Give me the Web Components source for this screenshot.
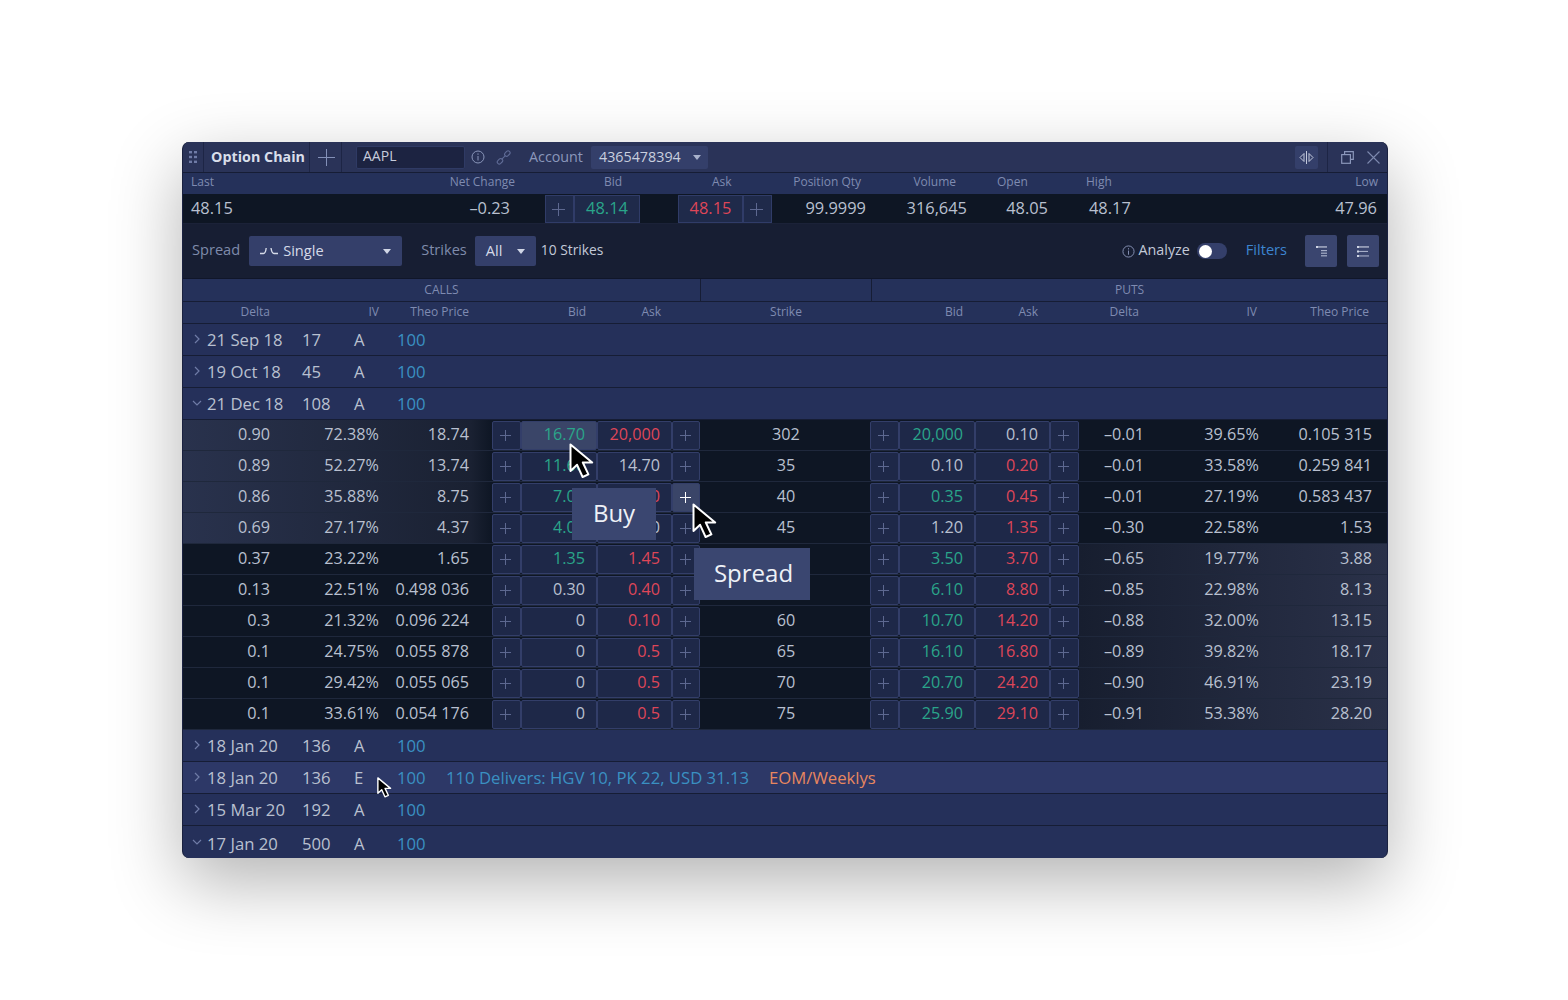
<!DOCTYPE html>
<html>
<head>
<meta charset="utf-8">
<title>Option Chain</title>
<style>
    html, body { margin: 0; background: #fff; }
    body { min-height: 1000px; font-family: "Open Sans", "Liberation Sans", sans-serif; color: #b9c0d0; }
    .page { min-height: 1000px; box-sizing: border-box; padding: 142px 0 0 182px; }
</style>
</head>
<body>
<div class="page">
<oc-window>
    <oc-titlebar></oc-titlebar>
    <oc-quote></oc-quote>
    <oc-toolbar></oc-toolbar>
    <oc-chain-head></oc-chain-head>
    <oc-group date="21 Sep 18" qty="17" kind="A" size="100"></oc-group>
    <oc-group date="19 Oct 18" qty="45" kind="A" size="100"></oc-group>
    <oc-group date="21 Dec 18" qty="108" kind="A" size="100" open></oc-group>
    <oc-row itm="calls" hot="bid" cells="0.90|72.38%|18.74|g16.70|r20,000|302|g20,000|0.10|–0.01|39.65%|0.105 315"></oc-row>
    <oc-row itm="calls" cells="0.89|52.27%|13.74|g11.60|14.70|35|0.10|r0.20|–0.01|33.58%|0.259 841"></oc-row>
    <oc-row itm="calls" hot="plus" cells="0.86|35.88%|8.75|g7.00|r7.50|40|g0.35|r0.45|–0.01|27.19%|0.583 437"></oc-row>
    <oc-row itm="calls" cells="0.69|27.17%|4.37|g4.00|4.50|45|1.20|r1.35|–0.30|22.58%|1.53"></oc-row>
    <oc-row itm="puts" cells="0.37|23.22%|1.65|g1.35|r1.45||g3.50|r3.70|–0.65|19.77%|3.88"></oc-row>
    <oc-row itm="puts" cells="0.13|22.51%|0.498 036|0.30|r0.40||g6.10|r8.80|–0.85|22.98%|8.13"></oc-row>
    <oc-row itm="puts" cells="0.3|21.32%|0.096 224|0|r0.10|60|g10.70|r14.20|–0.88|32.00%|13.15"></oc-row>
    <oc-row itm="puts" cells="0.1|24.75%|0.055 878|0|r0.5|65|g16.10|r16.80|–0.89|39.82%|18.17"></oc-row>
    <oc-row itm="puts" cells="0.1|29.42%|0.055 065|0|r0.5|70|g20.70|r24.20|–0.90|46.91%|23.19"></oc-row>
    <oc-row itm="puts" cells="0.1|33.61%|0.054 176|0|r0.5|75|g25.90|r29.10|–0.91|53.38%|28.20"></oc-row>
    <oc-group date="18 Jan 20" qty="136" kind="A" size="100"></oc-group>
    <oc-group date="18 Jan 20" qty="136" kind="E" size="100" note="110 Delivers: HGV 10, PK 22, USD 31.13" tag="EOM/Weeklys" active></oc-group>
    <oc-group date="15 Mar 20" qty="192" kind="A" size="100"></oc-group>
    <oc-group date="17 Jan 20" qty="500" kind="A" size="100" open last></oc-group>

    <oc-tip slot="over" style="left:390px;top:346px;width:84px;height:52px">Buy</oc-tip>
    <oc-tip slot="over" style="left:512px;top:406px;width:116px;height:52px;text-indent:3px">Spread</oc-tip>
    <oc-cursor slot="over" style="left:387px;top:301px"></oc-cursor>
    <oc-cursor slot="over" style="left:510px;top:361px"></oc-cursor>
    <oc-cursor slot="over" small style="left:195px;top:635px"></oc-cursor>
</oc-window>
</div>

<script>
const plusIcon = (size, color) => `<svg width="${size}" height="${size}" viewBox="0 0 ${size} ${size}" stroke="${color}" fill="none"><path d="M${size / 2} 0V${size}M0 ${size / 2}H${size}"/></svg>`

const ICONS = {
    grip: '<svg width="8" height="12" viewBox="0 0 8 12" fill="#6f7ba6"><rect width="3" height="2.4"/><rect x="5" width="3" height="2.4"/><rect y="4.8" width="3" height="2.4"/><rect x="5" y="4.8" width="3" height="2.4"/><rect y="9.6" width="3" height="2.4"/><rect x="5" y="9.6" width="3" height="2.4"/></svg>',
    info: '<svg width="14" height="14" viewBox="0 0 14 14" fill="none" stroke="#8a96ba"><circle cx="7" cy="7" r="6"/><path d="M7 6v4.5M7 3.4v1.4"/></svg>',
    link: '<svg width="15" height="15" viewBox="0 0 15 15" fill="none" stroke="#5f6b96" stroke-width="1.1"><rect x="8" y="1.2" width="6" height="4" rx="2" transform="rotate(-45 11 3.2) translate(0 .5)"/><rect x="1" y="9.3" width="6" height="4" rx="2" transform="rotate(-45 4 11.3)"/><path d="M5.6 9.4 9.4 5.6"/></svg>',
    split: '<svg width="15" height="13" viewBox="0 0 15 13" fill="none" stroke="#c3cadc"><path d="M7.5 0v13M5 2.5 1 6.5l4 4zM10 2.5l4 4-4 4z"/></svg>',
    restore: '<svg width="13" height="13" viewBox="0 0 13 13" fill="none" stroke="#8a96ba" stroke-width="1.2"><path d="M3.6 3.6V.7h8.7v7.6H9.4"/><rect x=".7" y="3.6" width="8.7" height="8.7"/></svg>',
    close: '<svg width="13" height="13" viewBox="0 0 13 13" fill="none" stroke="#7c88ae" stroke-width="1.1"><path d="M.5.5l12 12M12.5.5l-12 12"/></svg>',
    single: '<svg width="18" height="8" viewBox="0 0 18 8" fill="none" stroke="#d5dae8" stroke-width="1.4"><path d="M0 6.5h3.5Q5.5 6.5 6.2 1M11 1q.8 5.5 3 5.5H18"/></svg>',
    sortA: '<svg width="11" height="11" viewBox="0 0 11 11"><rect width="2" height="2" fill="#cfd5e4"/><rect x="2" y=".4" width="9" height="1.1" fill="#cfd5e4"/><rect x="5" y="4" width="6" height="1.2" fill="#a6aec8"/><rect x="5" y="6.6" width="6" height="1.2" fill="#a6aec8"/><rect x="5" y="9.2" width="6" height="1.2" fill="#a6aec8"/></svg>',
    sortB: '<svg width="12" height="11" viewBox="0 0 12 11"><rect width="2" height="2" fill="#cfd5e4"/><rect x="2" y=".4" width="10" height="1.1" fill="#cfd5e4"/><rect y="4.5" width="2" height="2" fill="#cfd5e4"/><rect x="2" y="4.9" width="9" height="1.1" fill="#a6aec8"/><rect y="9" width="2" height="2" fill="#cfd5e4"/><rect x="2" y="9.4" width="10" height="1.1" fill="#a6aec8"/></svg>',
    right: '<svg width="6" height="10" viewBox="0 0 6 10" fill="none" stroke="#6f7ba6" stroke-width="1.2"><path d="M1 1l4 4-4 4"/></svg>',
    down: '<svg width="10" height="6" viewBox="0 0 10 6" fill="none" stroke="#6f7ba6" stroke-width="1.2"><path d="M1 1l4 4 4-4"/></svg>'
}

// every element gets its shadow root the same way
class Base extends HTMLElement {
    render(html) {
        const shadow = this.shadowRoot || this.attachShadow({mode: 'open'})
        shadow.innerHTML = html
    }
}

class OcWindow extends Base {
    connectedCallback() {
        this.render(`
        <style>
            :host {
                display: block;
                position: relative;
                width: 1206px;
                border-radius: 7px;
                box-shadow: 0 24px 70px rgba(0, 0, 0, .3);
            }
            .clip {
                display: flex;
                flex-direction: column;
                border-left: 1px solid #1a2140;
                border-right: 1px solid #1a2140;
                border-radius: 7px;
                overflow: hidden;
                background: #0e1624;
            }
        </style>
        <div class="clip"><slot></slot></div>
        <slot name="over"></slot>
        `)
    }
}

class OcTitlebar extends Base {
    connectedCallback() {
        this.render(`
        <style>
            :host {
                display: flex;
                align-items: center;
                height: 30px;
                border-bottom: 1px solid #161d35;
                background: #2a3358;
                font-size: 14.3px;
                color: #8b97bb;
            }
            .cell {
                display: flex;
                align-items: center;
                justify-content: center;
                height: 100%;
                box-sizing: border-box;
                border-right: 1px solid #1d2545;
            }
            .grip { width: 21px; }
            .name { width: 106px; font-weight: 700; color: #d9deea; padding: 0 0 2px 3px; }
            .add { width: 32px; padding-left: 2px; }
            .sym {
                width: 109px;
                height: 23px;
                box-sizing: border-box;
                margin-left: 14px;
                padding-left: 6px;
                border: 1px solid #2f3a64;
                border-radius: 2px;
                background: #1c2341;
                color: #c6ccdc;
                font-size: 14px;
                line-height: 17px;
            }
            .i1 { margin-left: 6px; display: flex; }
            .i2 { margin-left: 11px; display: flex; }
            .acct { margin-left: 18px; padding-bottom: 1px; }
            .sel {
                display: flex;
                align-items: center;
                width: 117px;
                height: 23px;
                box-sizing: border-box;
                margin-left: 8px;
                padding: 0 0 1px 8px;
                border-radius: 2px;
                background: #343f6a;
                color: #c9cfdf;
            }
            .caret { margin: 1px 0 0 12px; border: 4px solid transparent; border-top: 5px solid #a8b1cb; border-bottom: 0; }
            .end { margin-left: auto; display: flex; align-items: center; height: 100%; }
            .split {
                display: flex;
                align-items: center;
                justify-content: center;
                width: 23px;
                height: 23px;
                border-radius: 2px;
                background: #343f6a;
            }
            .sep { width: 1px; height: 100%; margin-left: 9px; background: #1d2545; }
            .restore { display: flex; margin-left: 13px; }
            .close { display: flex; margin: 0 7px 0 13px; }
        </style>
        <div class="cell grip">${ICONS.grip}</div>
        <div class="cell name">Option Chain</div>
        <div class="cell add">${plusIcon(17, '#8390b8')}</div>
        <div class="sym">AAPL</div>
        <span class="i1">${ICONS.info}</span>
        <span class="i2">${ICONS.link}</span>
        <span class="acct">Account</span>
        <div class="sel">4365478394<span class="caret"></span></div>
        <div class="end">
            <div class="split">${ICONS.split}</div>
            <div class="sep"></div>
            <span class="restore">${ICONS.restore}</span>
            <span class="close">${ICONS.close}</span>
        </div>
        `)
    }
}

class OcQuote extends Base {
    connectedCallback() {
        this.render(`
        <style>
            :host { display: block; }
            .labels, .values {
                display: grid;
                grid-template-columns: 157px 175px 30px 95px 38px 94px 94px 101px 81px 152px 187px;
                align-items: center;
            }
            .labels {
                height: 21px;
                box-sizing: border-box;
                padding-bottom: 5px;
                background: #25315a;
                font-size: 12px;
                color: #7f8bb1;
            }
            .values {
                height: 29px;
                border-bottom: 1px solid #1b2238;
                background: #0e1624;
                font-size: 16.4px;
                color: #b9c0d0;
            }
            .values > div:not(.box) { padding-bottom: 2px; }
            .r { text-align: right; }
            .box { display: flex; align-self: stretch; margin: 1px 0 0; }
            .box div {
                display: flex;
                align-items: center;
                justify-content: center;
                box-sizing: border-box;
                border: 1px solid #303c68;
                background: #1f2a4a;
            }
            .p { width: 29px; padding-right: 2px; }
            .n { flex: 1; padding-bottom: 3px; }
            .g { color: #2aa58a; }
            .e { color: #de4658; }
        </style>
        <div class="labels">
            <div style="padding-left:8px">Last</div>
            <div class="r">Net Change</div>
            <div></div>
            <div style="padding-left:59px">Bid</div>
            <div></div>
            <div style="padding-left:34px">Ask</div>
            <div class="r" style="padding-right:5px">Position Qty</div>
            <div class="r" style="padding-right:11px">Volume</div>
            <div style="padding-left:30px">Open</div>
            <div style="padding-left:38px">High</div>
            <div class="r" style="padding-right:9px">Low</div>
        </div>
        <div class="values">
            <div style="padding-left:8px">48.15</div>
            <div class="r" style="padding-right:5px">–0.23</div>
            <div></div>
            <div class="box"><div class="p">${plusIcon(13, '#5d6890')}</div><div class="n g">48.14</div></div>
            <div></div>
            <div class="box"><div class="n e">48.15</div><div class="p">${plusIcon(13, '#5d6890')}</div></div>
            <div class="r">99.9999</div>
            <div class="r">316,645</div>
            <div class="r">48.05</div>
            <div style="padding-left:41px">48.17</div>
            <div class="r" style="padding-right:10px">47.96</div>
        </div>
        `)
    }
}

class OcToolbar extends Base {
    connectedCallback() {
        this.render(`
        <style>
            :host {
                display: flex;
                align-items: center;
                height: 54px;
                padding: 0 8px 0 9px;
                border-bottom: 1px solid #10162a;
                background: #171e33;
                font-size: 14.6px;
                color: #7f8bab;
            }
            .tx { padding-bottom: 4px; }
            .sel {
                display: flex;
                align-items: center;
                height: 30px;
                box-sizing: border-box;
                border-radius: 2px;
                background: #343f6a;
                color: #d5dae8;
            }
            .spread { width: 153px; margin-left: 9px; padding-left: 11px; }
            .spread span.t { margin-left: 5px; padding-bottom: 2px; }
            .strikes { width: 61px; margin-left: 8px; padding-left: 11px; }
            .strikes .tt { padding-bottom: 2px; }
            .caret { margin-left: auto; margin-right: 11px; border: 4px solid transparent; border-top: 5px solid #d0d6e6; border-bottom: 0; }
            .lab2 { margin-left: 19px; }
            .ten { margin-left: 5px; color: #c3c9d8; font-size: 13.8px; }
            .end { margin-left: auto; display: flex; align-items: center; font-size: 14.3px; }
            .an { margin-left: 4px; color: #c3c9d8; }
            .info { display: flex; }
            .info svg { width: 13px; height: 13px; }
            .tog {
                display: flex;
                align-items: center;
                width: 30px;
                height: 16px;
                margin-left: 7px;
                padding-left: 2px;
                box-sizing: border-box;
                border-radius: 8px;
                background: #343f6a;
            }
            .tog i { width: 13px; height: 13px; border-radius: 50%; background: #fff; }
            .filters { margin-left: 19px; color: #3d85d0; font-size: 14.6px; }
            .btn {
                display: flex;
                align-items: center;
                justify-content: center;
                width: 32px;
                height: 32px;
                border-radius: 2px;
                background: #3a456f;
            }
            .b1 { margin-left: 18px; }
            .b2 { margin-left: 10px; }
        </style>
        <span class="tx">Spread</span>
        <div class="sel spread">${ICONS.single}<span class="t">Single</span><span class="caret"></span></div>
        <span class="lab2 tx">Strikes</span>
        <div class="sel strikes"><span class="tt">All</span><span class="caret"></span></div>
        <span class="ten tx">10 Strikes</span>
        <div class="end">
            <span class="info">${ICONS.info}</span>
            <span class="an tx">Analyze</span>
            <div class="tog"><i></i></div>
            <span class="filters tx">Filters</span>
            <div class="btn b1">${ICONS.sortA}</div>
            <div class="btn b2">${ICONS.sortB}</div>
        </div>
        `)
    }
}

class OcChainHead extends Base {
    connectedCallback() {
        this.render(`
        <style>
            :host { display: block; font-size: 12px; color: #7f8bb1; background: #25315a; }
            .sides {
                display: grid;
                grid-template-columns: 517px 1px 170px 1px 515px;
                height: 22px;
                line-height: 22px;
                border-bottom: 1px solid #161d35;
                text-align: center;
            }
            .sides i { background: #161d35; }
            .cols {
                display: grid;
                grid-template-columns: 87px 109px 90px 23px 29px 76px 75px 28px 170px 29px 76px 75px 29px 65px 115px 113px 15px;
                height: 21px;
                line-height: 20px;
                border-bottom: 1px solid #161d35;
            }
            .cols div { text-align: right; white-space: nowrap; }
        </style>
        <div class="sides"><div>CALLS</div><i></i><div></div><i></i><div>PUTS</div></div>
        <div class="cols">
            <div>Delta</div>
            <div>IV</div>
            <div>Theo Price</div>
            <div></div><div></div>
            <div style="padding-right:11px">Bid</div>
            <div style="padding-right:11px">Ask</div>
            <div></div>
            <div style="text-align:center;padding-left:2px">Strike</div>
            <div></div>
            <div style="padding-right:12px">Bid</div>
            <div style="padding-right:12px">Ask</div>
            <div></div>
            <div style="padding-right:5px">Delta</div>
            <div style="padding-right:2px">IV</div>
            <div style="padding-right:3px">Theo Price</div>
            <div></div>
        </div>
        `)
    }
}

class OcGroup extends Base {
    connectedCallback() {
        const a = n => this.getAttribute(n) || ''
        const note = a('note') ? `<span class="note">${a('note')}</span><span class="tag">${a('tag')}</span>` : ''
        const last = this.hasAttribute('last')
        this.render(`
        <style>
            :host {
                display: flex;
                align-items: center;
                height: ${last ? 30 : 31}px;
                padding-top: ${last ? 2 : 0}px;
                border-bottom: ${last ? 0 : '1px solid #161d35'};
                background: ${this.hasAttribute('active') ? '#2d3867' : '#25305a'};
                font-size: 16.7px;
                color: #b9c0d0;
                white-space: nowrap;
            }
            .chev { display: flex; justify-content: center; box-sizing: border-box; width: 24px; padding-left: 4px; margin-top: -2px; }
            .date { width: 95px; }
            .qty { width: 52px; }
            .kind { width: 43px; }
            .size { width: 49px; color: #3a90c2; }
            .note { width: 323px; color: #3a90c2; }
            .tag { color: #e8875f; }
        </style>
        <span class="chev">${this.hasAttribute('open') ? ICONS.down : ICONS.right}</span>
        <span class="date">${a('date')}</span>
        <span class="qty">${a('qty')}</span>
        <span class="kind">${a('kind')}</span>
        <span class="size">${a('size')}</span>
        ${note}
        `)
    }
}

class OcRow extends Base {
    connectedCallback() {
        const c = this.getAttribute('cells').split('|')
        const itm = this.getAttribute('itm')
        const hot = this.getAttribute('hot')
        const money = (v, extra) => {
            const cls = v[0] == 'g' ? 'g' : v[0] == 'r' ? 'e' : ''
            const text = cls ? v.slice(1) : v
            return `<div class="btn num ${cls} ${extra || ''}">${text}</div>`
        }
        const plus = extra => `<div class="btn pl ${extra || ''}">${plusIcon(11, extra ? '#fff' : '#5d6890')}</div>`
        // the thin gap in long theo prices
        const theo = v => v.replace(' ', '<span class="gap"></span>')
        const bg = itm == 'calls'
            ? 'linear-gradient(90deg, #29324d 0, #1a2132 288px, #0e1624 309px, #0e1624 100%)'
            : 'linear-gradient(90deg, #0e1624 896px, #171e2f 896px, #2a3149 100%)'
        this.render(`
        <style>
            :host {
                display: grid;
                grid-template-columns: 87px 109px 90px 23px 29px 76px 75px 28px 170px 29px 76px 75px 29px 65px 115px 113px 15px;
                height: 30px;
                align-items: center;
                border-bottom: 1px solid #1f283c;
                background: ${bg};
                font-size: 16.2px;
                color: #b9c0d0;
                white-space: nowrap;
            }
            .t, .mid { padding-bottom: 2px; }
            .t { text-align: right; }
            .mid { text-align: center; padding-left: 2px; }
            .btn {
                box-sizing: border-box;
                height: 29px;
                margin-top: 1px;
                line-height: 25px;
                border: 1px solid #333e69;
                border-radius: 2px;
                background: #1e2848;
            }
            .num { padding-right: 11px; text-align: right; }
            .pl { display: flex; align-items: center; justify-content: center; padding-right: 2px; }
            .hot { background: #3a4568; }
            .g { color: #2aa58a; }
            .e { color: #de4658; }
            .gap { display: inline-block; width: 4.5px; }
        </style>
        <div class="t">${c[0]}</div>
        <div class="t">${c[1]}</div>
        <div class="t">${theo(c[2])}</div>
        <div></div>
        ${plus()}
        ${money(c[3], hot == 'bid' ? 'hot' : '')}
        ${money(c[4])}
        ${plus(hot == 'plus' ? 'hot' : '')}
        <div class="mid">${c[5]}</div>
        ${plus()}
        ${money(c[6])}
        ${money(c[7])}
        ${plus()}
        <div class="t">${c[8]}</div>
        <div class="t">${c[9]}</div>
        <div class="t">${theo(c[10])}</div>
        <div></div>
        `)
    }
}

class OcTip extends Base {
    connectedCallback() {
        this.render(`
        <style>
            :host {
                display: flex;
                align-items: center;
                justify-content: center;
                box-sizing: border-box;
                padding-bottom: 4px;
                position: absolute;
                background: #3a4670;
                color: #eef1f7;
                font-size: 24px;
            }
        </style>
        <slot></slot>
        `)
    }
}

class OcCursor extends Base {
    connectedCallback() {
        const small = this.hasAttribute('small')
        this.render(`
        <style>
            :host { display: block; position: absolute; width: ${small ? 14 : 24}px; height: ${small ? 21 : 36}px; }
            svg { display: block; width: 100%; height: 100%; overflow: visible; }
        </style>
        <svg viewBox="0 0 24 36"><path d="M1.5 1.5V28l6.6-6.2L13.6 34l5.8-2.6-5.6-11.9h9.4z" fill="#000" stroke="#fff" stroke-width="${small ? 2.4 : 2}" stroke-linejoin="round"/></svg>
        `)
    }
}

customElements.define('oc-window', OcWindow)
customElements.define('oc-titlebar', OcTitlebar)
customElements.define('oc-quote', OcQuote)
customElements.define('oc-toolbar', OcToolbar)
customElements.define('oc-chain-head', OcChainHead)
customElements.define('oc-group', OcGroup)
customElements.define('oc-row', OcRow)
customElements.define('oc-tip', OcTip)
customElements.define('oc-cursor', OcCursor)
</script>
</body>
</html>
